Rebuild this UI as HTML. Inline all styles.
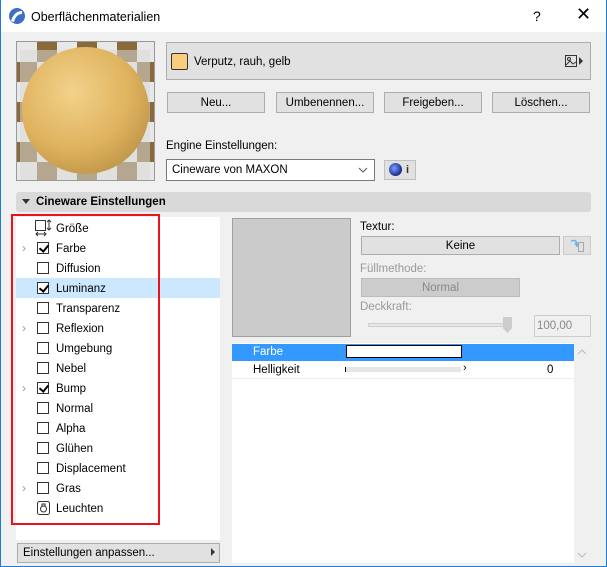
<!DOCTYPE html><html><head><meta charset="utf-8"><style>
*{box-sizing:border-box;margin:0;padding:0}
body{width:607px;height:567px;overflow:hidden;font-family:"Liberation Sans",sans-serif;font-size:11px;color:#000;background:#f0f0f0;position:relative}
.a{position:absolute}
.btn{position:absolute;background:#e1e1e1;border:1px solid #adadad;text-align:center;font-size:11.5px}
.row{position:absolute;left:16px;width:204px;height:20px;line-height:20px}
.row .t{position:absolute;left:40px;top:1px;font-size:11.5px}
.cb{position:absolute;left:21px;top:4px;width:12px;height:12px;border:1px solid #333;background:#fff}
.cb.c::after{content:"";position:absolute;left:3px;top:0px;width:4px;height:7px;border:solid #000;border-width:0 2px 2px 0;transform:rotate(40deg)}
.ch{position:absolute;left:6px;top:0;color:#999;font-size:12px}
</style></head><body>
<div class="a" style="left:0;top:0;width:607px;height:567px;border:1px solid #1c7dd8;border-top:none"></div>
<div class="a" style="left:1px;top:0;width:605px;height:32px;background:#fff"></div>
<svg class="a" style="left:8px;top:7px" width="18" height="18" viewBox="0 0 18 18"><circle cx="9" cy="9" r="8" fill="#3d6fc4"/><path d="M3 14 Q6 4 14 4 L14 7 Q8 7 6 15Z" fill="#fff"/></svg>
<div class="a" style="left:31px;top:10px;font-size:12.5px">Oberflächenmaterialien</div>
<div class="a" style="left:533px;top:8px;font-size:14px">?</div>
<div class="a" style="left:576px;top:4px;font-size:18px;font-weight:300">✕</div>

<div class="a" style="left:16px;top:41px;width:139px;height:140px;border:1px solid #999;overflow:hidden;background:
repeating-conic-gradient(#8a6a3a 0 25%,#e8e8e8 0 50%) 0 0/40px 40px">
<div class="a" style="left:3px;top:0;width:130px;height:130px;background:#d9d9d6;top:8px;opacity:.55"></div>
<div class="a" style="left:5px;top:5px;width:127px;height:127px;border-radius:50%;background:radial-gradient(circle at 40% 35%,#f2d28a,#dfb35f 50%,#a98238 100%)"></div>
</div>

<div class="a" style="left:166px;top:42px;width:425px;height:38px;background:#e1e1e1;border:1px solid #adadad"></div>
<div class="a" style="left:171px;top:53px;width:17px;height:17px;background:#f9cd7e;border:1px solid #333;border-radius:2px"></div>
<div class="a" style="left:194px;top:56px;font-size:11.5px">Verputz, rauh, gelb</div>
<svg class="a" style="left:564px;top:53px" width="22" height="16"><rect x="1.5" y="2.5" width="11" height="11" fill="none" stroke="#333"/><circle cx="5" cy="6" r="1.5" fill="none" stroke="#333"/><path d="M2 12 L6 8 L9 11 L12 9" fill="none" stroke="#333"/><path d="M15 4 L19 8 L15 12Z" fill="#333"/></svg>

<div class="btn" style="left:167px;top:92px;width:98px;height:21px;line-height:21px">Neu...</div>
<div class="btn" style="left:276px;top:92px;width:98px;height:21px;line-height:21px">Umbenennen...</div>
<div class="btn" style="left:384px;top:92px;width:98px;height:21px;line-height:21px">Freigeben...</div>
<div class="btn" style="left:492px;top:92px;width:98px;height:21px;line-height:21px">Löschen...</div>

<div class="a" style="left:166px;top:140px;font-size:11.5px">Engine Einstellungen:</div>
<div class="a" style="left:166px;top:159px;width:209px;height:22px;background:#fff;border:1px solid #7a7a7a"></div>
<div class="a" style="left:172px;top:164px;font-size:11.5px">Cineware von MAXON</div>
<svg class="a" style="left:358px;top:166px" width="10" height="8"><path d="M1 2 L5 6 L9 2" fill="none" stroke="#555"/></svg>
<div class="a" style="left:384px;top:160px;width:32px;height:20px;background:#e1e1e1;border:1px solid #c0c0c0"></div>
<div class="a" style="left:389px;top:163px;width:13px;height:13px;border-radius:50%;background:radial-gradient(circle at 40% 40%,#7aa0ff,#1a2a8a 70%,#000)"></div>
<div class="a" style="left:406px;top:164px;font-size:11px;font-weight:bold;color:#333">i</div>

<div class="a" style="left:16px;top:192px;width:575px;height:20px;background:#d9d9d9;border-radius:3px"></div>
<div class="a" style="left:22px;top:199px;width:0;height:0;border-left:4px solid transparent;border-right:4px solid transparent;border-top:5px solid #333"></div>
<div class="a" style="left:36px;top:196px;font-size:11.5px;font-weight:bold">Cineware Einstellungen</div>

<div class="a" style="left:16px;top:217px;width:204px;height:323px;background:#fff"></div>
<div class="a" style="left:16px;top:278px;width:204px;height:20px;background:#cce8ff"></div>
<div class="row" style="top:218px"><svg class="a" style="left:18px;top:1px" width="18" height="18"><rect x="1.5" y="1.5" width="10" height="10" fill="none" stroke="#333"/><path d="M15 1v10M13 3l2-2 2 2M13 9l2 2 2-2M2 15h10M4 13l-2 2 2 2M10 13l2 2-2 2" fill="none" stroke="#333"/></svg><span class="t">Größe</span></div>
<div class="row" style="top:238px"><span class="ch">›</span><span class="cb c"></span><span class="t">Farbe</span></div>
<div class="row" style="top:258px"><span class="cb"></span><span class="t">Diffusion</span></div>
<div class="row" style="top:278px"><span class="cb c"></span><span class="t">Luminanz</span></div>
<div class="row" style="top:298px"><span class="cb"></span><span class="t">Transparenz</span></div>
<div class="row" style="top:318px"><span class="ch">›</span><span class="cb"></span><span class="t">Reflexion</span></div>
<div class="row" style="top:338px"><span class="cb"></span><span class="t">Umgebung</span></div>
<div class="row" style="top:358px"><span class="cb"></span><span class="t">Nebel</span></div>
<div class="row" style="top:378px"><span class="ch">›</span><span class="cb c"></span><span class="t">Bump</span></div>
<div class="row" style="top:398px"><span class="cb"></span><span class="t">Normal</span></div>
<div class="row" style="top:418px"><span class="cb"></span><span class="t">Alpha</span></div>
<div class="row" style="top:438px"><span class="cb"></span><span class="t">Glühen</span></div>
<div class="row" style="top:458px"><span class="cb"></span><span class="t">Displacement</span></div>
<div class="row" style="top:478px"><span class="ch">›</span><span class="cb"></span><span class="t">Gras</span></div>
<div class="row" style="top:498px"><svg class="a" style="left:20px;top:2px" width="15" height="16"><rect x="1.5" y="1.5" width="12" height="13" rx="2" fill="none" stroke="#333"/><circle cx="7.5" cy="9" r="3" fill="none" stroke="#333"/><path d="M6 4h3v2h-3z" fill="none" stroke="#333"/></svg><span class="t">Leuchten</span></div>
<div class="a" style="left:11px;top:214px;width:149px;height:311px;border:2px solid #e8141c"></div>

<div class="btn" style="left:17px;top:543px;width:203px;height:20px;line-height:19px;text-align:left;padding-left:5px">Einstellungen anpassen...</div>
<div class="a" style="left:211px;top:548px;width:0;height:0;border-top:4px solid transparent;border-bottom:4px solid transparent;border-left:4px solid #333"></div>

<div class="a" style="left:232px;top:218px;width:119px;height:119px;background:#cbcbcb;border:1px solid #a0a0a0"></div>
<div class="a" style="left:360px;top:221px;font-size:11.5px">Textur:</div>
<div class="btn" style="left:361px;top:236px;width:199px;height:19px;line-height:18px">Keine</div>
<div class="a" style="left:563px;top:236px;width:28px;height:19px;background:#e1e1e1;border:1px solid #ccc"></div>
<svg class="a" style="left:569px;top:238px" width="16" height="15"><path d="M2 3 Q8 1 8 7 M6 5l2 3 2-3" fill="none" stroke="#6ab0e8" stroke-width="1.5"/><rect x="9.5" y="4.5" width="5" height="9" fill="none" stroke="#aaa"/></svg>
<div class="a" style="left:360px;top:263px;font-size:11.5px;color:#999">Füllmethode:</div>
<div class="a" style="left:361px;top:278px;width:159px;height:19px;background:#ccc;border:1px solid #bbb;text-align:center;line-height:18px;color:#888;font-size:11.5px">Normal</div>
<div class="a" style="left:360px;top:301px;font-size:11.5px;color:#999">Deckkraft:</div>
<div class="a" style="left:368px;top:323px;width:140px;height:4px;background:#e6e6e6;border:1px solid #d0d0d0"></div>
<div class="a" style="left:503px;top:317px;width:9px;height:16px;background:#ccc;clip-path:polygon(0 0,100% 0,100% 70%,50% 100%,0 70%)"></div>
<div class="a" style="left:534px;top:315px;width:57px;height:22px;border:1px solid #ccc;background:#f0f0f0;color:#888;line-height:21px;padding-left:2px;font-size:11.5px">100,00</div>

<div class="a" style="left:232px;top:343px;width:342px;height:220px;background:#fff"></div>
<div class="a" style="left:232px;top:344px;width:342px;height:17px;background:#3399ff"></div>
<div class="a" style="left:253px;top:346px;color:#fff;font-size:11.5px">Farbe</div>
<div class="a" style="left:346px;top:345px;width:116px;height:13px;background:#fff;border:1px solid #000"></div>
<div class="a" style="left:253px;top:364px;font-size:11.5px">Helligkeit</div>
<div class="a" style="left:345px;top:367px;width:116px;height:5px;background:#e6e6e6;border-left:1px solid #000"></div>
<div class="a" style="left:463px;top:362px;font-size:11px">›</div>
<div class="a" style="left:547px;top:364px;font-size:11.5px">0</div>
<div class="a" style="left:232px;top:378px;width:342px;height:1px;background:#eee"></div>
<svg class="a" style="left:577px;top:348px" width="10" height="8"><path d="M1 6 L5 2 L9 6" fill="none" stroke="#bbb"/></svg>
<svg class="a" style="left:577px;top:551px" width="10" height="8"><path d="M1 2 L5 6 L9 2" fill="none" stroke="#bbb"/></svg>
</body></html>
